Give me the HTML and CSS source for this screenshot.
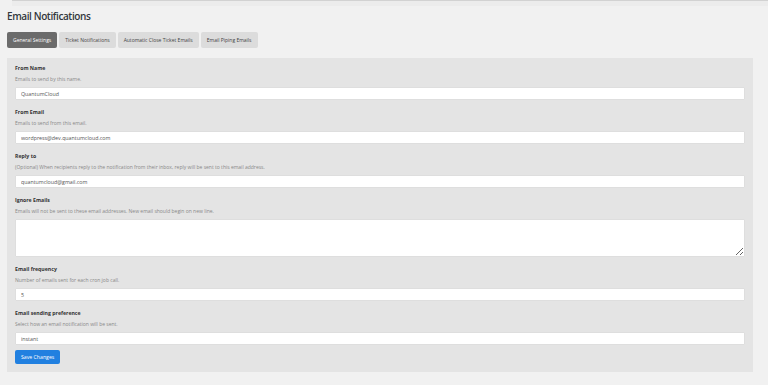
FILE: index.html
```html
<!DOCTYPE html>
<html lang="en">
  <head>
    <meta charset="UTF-8" />
    <meta name="viewport" content="width=device-width, initial-scale=1.0" />
    <title>Email Notifications</title>
    <link rel="stylesheet" href="styles.css">
  </head>
  <body>
    <div class="top-edge"></div>
    <div class="wrap">
      <h1 class="page-title">Email Notifications</h1>

      <nav class="tabs">
        <a href="#" class="tab tab--active">General Settings</a>
        <a href="#" class="tab">Ticket Notifications</a>
        <a href="#" class="tab">Automatic Close Ticket Emails</a>
        <a href="#" class="tab">Email Piping Emails</a>
      </nav>

      <form class="settings-panel" onsubmit="return false">
        <div class="field">
          <label class="field__label">From Name</label>
          <p class="field__desc">Emails to send by this name.</p>
          <input class="field__input" type="text" value="QuantumCloud" />
        </div>

        <div class="field">
          <label class="field__label">From Email</label>
          <p class="field__desc">Emails to send from this email.</p>
          <input class="field__input" type="text" value="wordpress@dev.quantumcloud.com" />
        </div>

        <div class="field">
          <label class="field__label">Reply to</label>
          <p class="field__desc">(Optional) When recipients reply to the notification from their inbox, reply will be sent to this email address.</p>
          <input class="field__input" type="text" value="quantumcloud@gmail.com" />
        </div>

        <div class="field">
          <label class="field__label">Ignore Emails</label>
          <p class="field__desc">Emails will not be sent to these email addresses. New email should begin on new line.</p>
          <textarea class="field__input field__textarea"></textarea>
        </div>

        <div class="field">
          <label class="field__label">Email frequency</label>
          <p class="field__desc">Number of emails sent for each cron job call.</p>
          <input class="field__input" type="text" value="5" />
        </div>

        <div class="field">
          <label class="field__label">Email sending preference</label>
          <p class="field__desc">Select how an email notification will be sent.</p>
          <input class="field__input" type="text" value="instant" />
        </div>

        <button class="save-btn" type="submit">Save Changes</button>
      </form>
    </div>
  </body>
</html>
```

FILE: styles.css
```css
body {
  font-family: "Open Sans", "Noto Sans", sans-serif;
  margin: 0;
  padding: 0;
  background-color: #f1f1f1;
  color: #333;
}

.top-edge {
  margin-left: 12px;
  height: 5px;
  border-top: 1px solid #d2d2d2;
  background-color: #ececec;
}

.wrap {
  padding: 0 15px 0 7px;
}

.page-title {
  margin: 1px 0 0;
  font-size: 10px;
  font-weight: 600;
  letter-spacing: -0.4px;
  line-height: 18px;
  color: #32373c;
}

/* tabs */
.tabs {
  display: flex;
  gap: 2px;
  margin-top: 7px;
}

.tab {
  display: block;
  height: 16px;
  line-height: 16px;
  padding: 0 6px;
  font-size: 5px;
  color: #444;
  text-decoration: none;
  background-color: #dcdcdc;
  border-radius: 2px;
}

.tab--active {
  background-color: #6b6b6b;
  color: #fff;
}

/* settings box */
.settings-panel {
  margin-top: 10px;
  padding: 6px 8px 8px;
  background-color: #e4e4e4;
}

.field {
  margin-bottom: 8px;
}

.field__label {
  display: block;
  font-size: 5.2px;
  font-weight: 700;
  line-height: 8px;
  color: #333;
}

.field__desc {
  margin: 3px 0 4px;
  font-size: 5px;
  line-height: 8px;
  color: #888;
}

.field__input {
  display: block;
  box-sizing: border-box;
  width: 100%;
  height: 13px;
  margin: 0;
  padding: 0 5px;
  font-family: inherit;
  font-size: 5.3px;
  color: #555;
  background-color: #fff;
  border: 1px solid #dedede;
  border-radius: 1px;
  outline: none;
}

.field__textarea {
  height: 38px;
  resize: vertical;
}

.save-btn {
  display: block;
  margin-top: -3px;
  height: 14px;
  padding: 0 6px;
  font-family: inherit;
  font-size: 5.2px;
  color: #fff;
  background-color: #2180e0;
  border: none;
  border-radius: 2px;
  cursor: pointer;
}

.save-btn:hover {
  background-color: #1a6ec4;
}
```
